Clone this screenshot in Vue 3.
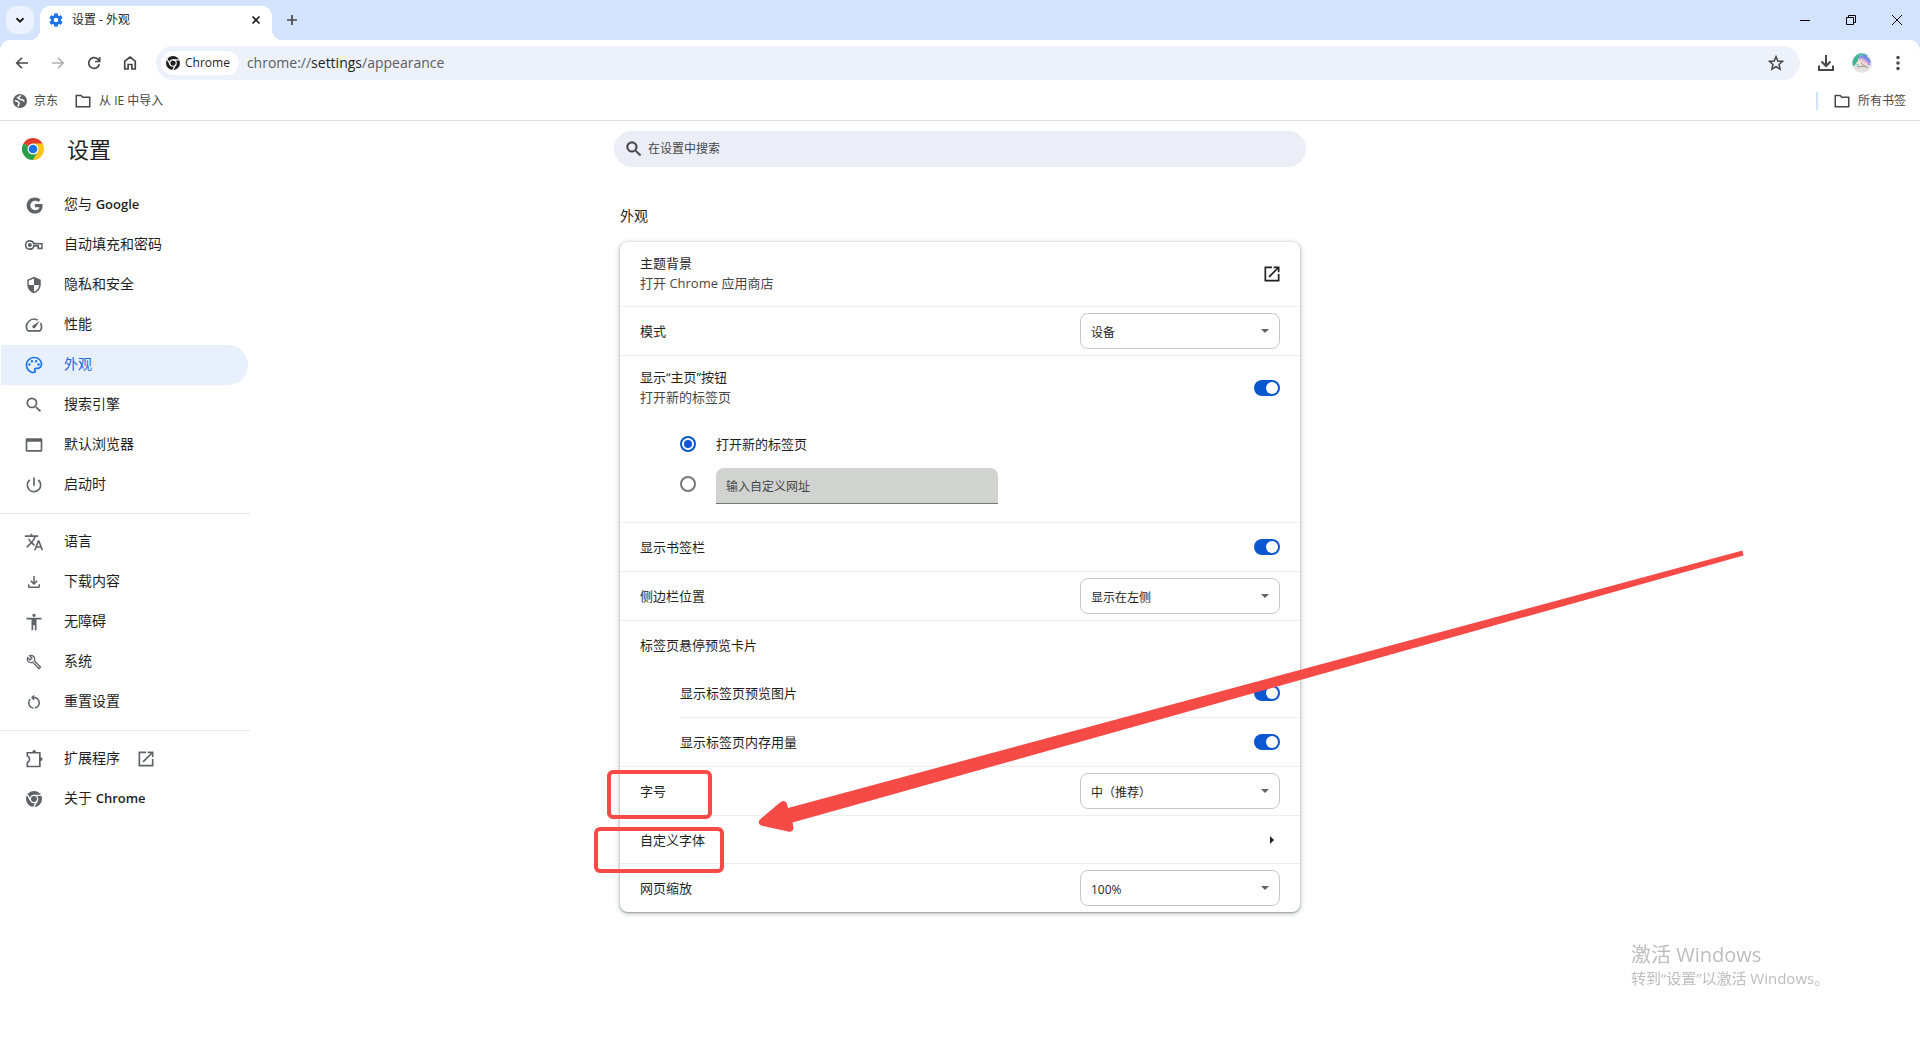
<script setup>
import { ref } from 'vue'

const paths = {
  google: 'M12.5 10v4.400h6.600c-.6 2.600-2.900 4.300-6.300 4.300a6.700 6.700 0 1 1 0-13.400c1.900 0 3.400.7 4.600 1.800l3.200-3.200A11.400 11.400 0 0 0 12.500.6C6 .6.900 5.600.9 12s5.100 11.400 11.600 11.400c6.700 0 10.900-4.600 10.900-11.200 0-.8-.1-1.500-.2-2.200z',
  shield: 'M12 1L3 5v6c0 5.550 3.840 10.740 9 12 5.160-1.260 9-6.450 9-12V5l-9-4zm0 10.990h7c-.53 4.120-3.280 7.790-7 8.940V12H5V6.300l7-3.110v8.800z',
  speed: 'M20.380 8.570l-1.230 1.850a8 8 0 0 1-.22 7.580H5.070A8 8 0 0 1 15.580 6.850l1.850-1.230A10 10 0 0 0 3.350 19a2 2 0 0 0 1.720 1h13.850a2 2 0 0 0 1.740-1 10 10 0 0 0-.27-10.440zM10.590 15.410a2 2 0 0 0 2.830 0l5.660-8.490-8.490 5.660a2 2 0 0 0 0 2.830z',
  palette: 'M12 22C6.490 22 2 17.510 2 12S6.490 2 12 2s10 4.040 10 9c0 3.310-2.690 6-6 6h-1.770c-.28 0-.5.22-.5.5 0 .12.05.23.13.33.41.47.64 1.060.64 1.670A2.500 2.500 0 0 1 12 22zm0-18c-4.410 0-8 3.590-8 8s3.590 8 8 8c.28 0 .5-.22.5-.5a.54.54 0 0 0-.14-.35c-.41-.46-.63-1.050-.63-1.650a2.500 2.500 0 0 1 2.500-2.500H16c2.210 0 4-1.790 4-4 0-3.860-3.590-7-8-7zM5 11.500a1.500 1.500 0 1 0 3 0a1.500 1.500 0 1 0-3 0zM8 7.500a1.500 1.500 0 1 0 3 0a1.500 1.500 0 1 0-3 0zM13 7.500a1.500 1.500 0 1 0 3 0a1.500 1.500 0 1 0-3 0zM16 11.500a1.500 1.500 0 1 0 3 0a1.500 1.500 0 1 0-3 0z',
  search: 'M15.500 14h-.79l-.28-.27A6.471 6.471 0 0 0 16 9.500 6.500 6.500 0 1 0 9.500 16c1.610 0 3.090-.59 4.230-1.570l.27.28v.79l5 4.990L20.490 19l-4.990-5zm-6 0C7.010 14 5 11.990 5 9.500S7.010 5 9.500 5 14 7.010 14 9.500 11.990 14 9.500 14z',
  browser: 'M3.500 4h17A1.500 1.500 0 0 1 22 5.500v13a1.500 1.500 0 0 1-1.500 1.500h-17A1.500 1.500 0 0 1 2 18.500v-13A1.500 1.500 0 0 1 3.500 4zM4 8v10h16V8z',
  power: 'M13 3h-2v10h2V3zm4.830 2.170l-1.420 1.420A6.920 6.920 0 0 1 19 12c0 3.870-3.130 7-7 7A6.995 6.995 0 0 1 7.580 6.580L6.170 5.170A8.932 8.932 0 0 0 3 12a9 9 0 0 0 18 0c0-2.740-1.230-5.180-3.170-6.830z',
  translate: 'M12.870 15.070l-2.540-2.510.03-.03A17.520 17.520 0 0 0 14.070 6H17V4h-7V2H8v2H1v1.990h11.170C11.500 7.920 10.440 9.750 9 11.350 8.070 10.320 7.300 9.190 6.690 8h-2c.73 1.630 1.730 3.170 2.980 4.560l-5.090 5.020L4 19l5-5 3.110 3.110.76-2.040zM18.500 10h-2L12 22h2l1.120-3h4.750L21 22h2l-4.500-12zm-2.620 7l1.620-4.330L19.120 17h-3.240z',
  download: 'M12 16l5-5-1.400-1.450-2.600 2.600V4h-2v8.150L8.400 9.550 7 11zM6 20c-1.100 0-2-.9-2-2v-3h2v3h12v-3h2v3c0 1.100-.9 2-2 2z',
  person: 'M12 2c1.100 0 2 .9 2 2s-.9 2-2 2-2-.9-2-2 .9-2 2-2zm9 7h-6v13h-2v-6h-2v6H9V9H3V7h18v2z',
  wrench: 'M22.610 18.990l-9.080-9.080c.93-2.340.45-5.100-1.440-7C9.790.61 6.210.4 3.660 2.260L7.500 6.110 6.080 7.520 2.250 3.690C.39 6.230.6 9.820 2.900 12.110c1.860 1.860 4.570 2.350 6.890 1.480l9.110 9.110c.39.39 1.020.39 1.410 0l2.300-2.300c.4-.38.4-1.010 0-1.410zm-3 1.600l-9.460-9.460c-.61.45-1.290.72-2 .82-1.360.2-2.790-.21-3.830-1.250C3.370 9.760 2.930 8.500 3 7.260l3.090 3.090 4.240-4.240-3.090-3.090c1.240-.07 2.490.37 3.440 1.310 1.080 1.080 1.490 2.570 1.240 3.960-.12.71-.42 1.370-.88 1.960l9.450 9.450-.88.89z',
  reset: 'M6 13c0-1.650.67-3.150 1.760-4.240L6.340 7.340A8.014 8.014 0 0 0 4 13c0 4.080 3.050 7.440 7 7.930v-2.020c-2.830-.48-5-2.940-5-5.910zm14 0c0-4.420-3.580-8-8-8-.06 0-.12.01-.18.01l1.090-1.090L11.500 2.500 8 6l3.500 3.500 1.410-1.410-1.080-1.080c.06 0 .12-.01.17-.01 3.310 0 6 2.690 6 6 0 2.970-2.170 5.430-5 5.910v2.020c3.950-.49 7-3.850 7-7.930z',
  launch: 'M19 19H5V5h7V3H3v18h18v-9h-2v7zM14 3v2h3.590l-9.830 9.830 1.410 1.410L19 6.410V10h2V3h-7z',
  key: 'M7 6a6 6 0 1 0 5.700 8H16v3h6.500V9.500h-.8l-9-.1A6 6 0 0 0 7 6zm0 2a4 4 0 0 1 3.900 3.400H20.700V15H18v-3h-7.100A4 4 0 1 1 7 8zm0 1.500a2.500 2.500 0 1 0 0 5a2.500 2.500 0 0 0 0-5z',
  puzzle: 'M10 3.500a2.200 2.200 0 0 1 4.400 0H20V9.800a2.300 2.300 0 0 1 0 4.600V22H3v-6.500a3.300 3.300 0 0 0 0-6.500V3.500zM5 5.500v2.200a5.200 5.200 0 0 1 0 9V20h13V5.500z',
  gear: 'M19.430 12.980c.04-.32.07-.64.07-.98s-.03-.66-.07-.98l2.110-1.650c.19-.15.24-.42.12-.64l-2-3.460c-.12-.22-.39-.3-.61-.22l-2.490 1c-.52-.4-1.080-.73-1.690-.98l-.38-2.650A.49.49 0 0 0 14 2h-4c-.25 0-.46.18-.49.42l-.38 2.650c-.61.25-1.170.59-1.690.98l-2.490-1c-.23-.09-.49 0-.61.22l-2 3.460c-.13.22-.07.49.12.64l2.110 1.650c-.04.32-.07.65-.07.98s.03.66.07.98l-2.110 1.650c-.19.15-.24.42-.12.64l2 3.460c.12.22.39.3.61.22l2.490-1c.52.4 1.080.73 1.690.98l.38 2.650c.03.24.24.42.49.42h4c.25 0 .46-.18.49-.42l.38-2.650c.61-.25 1.170-.59 1.690-.98l2.490 1c.23.09.49 0 .61-.22l2-3.460c.12-.22.07-.49-.12-.64l-2.110-1.650zM12 15.500a3.500 3.500 0 1 1 0-7a3.500 3.500 0 0 1 0 7z',
  folder: 'M3 4.500h6.500l2 2.500H21v12.500H3z',
}

const menus = [
  [
    { icon: 'google', text: '您与 ', latin: 'Google', size: 17 },
    { icon: 'key', text: '自动填充和密码' },
    { icon: 'shield', text: '隐私和安全', size: 18 },
    { icon: 'speed', text: '性能' },
    { icon: 'palette', text: '外观', active: true },
    { icon: 'search', text: '搜索引擎' },
    { icon: 'browser', text: '默认浏览器', size: 20 },
    { icon: 'power', text: '启动时' },
  ],
  [
    { icon: 'translate', text: '语言' },
    { icon: 'download', text: '下载内容', size: 18 },
    { icon: 'person', text: '无障碍' },
    { icon: 'wrench', text: '系统', size: 16 },
    { icon: 'reset', text: '重置设置', size: 18 },
  ],
  [
    { icon: 'puzzle', text: '扩展程序', external: true },
    { icon: 'chrome', text: '关于 ', latin: 'Chrome' },
  ],
]

const homeButton = ref(true)
const bookmarks = ref(true)
const previewImage = ref(true)
const memoryUsage = ref(true)
const homeTarget = ref('newtab')
</script>

<template>
  <div class="window">
    <header class="tabstrip">
      <button class="tab-search" aria-label="搜索标签页">
        <svg width="12" height="12" viewBox="0 0 12 12" class="line"><path d="M2.500 4.200L6 7.700l3.500-3.500" stroke-width="2" /></svg>
      </button>
      <div class="tab">
        <svg width="16" height="16" viewBox="0 0 24 24" class="tab-gear"><path :d="paths.gear" /></svg>
        <span class="tab-title">设置 - 外观</span>
        <button class="bare" aria-label="关闭标签页">
          <svg width="16" height="16" viewBox="0 0 16 16" class="line"><path d="M4.500 4.500l7 7M11.500 4.500l-7 7" stroke-width="1.600" /></svg>
        </button>
      </div>
      <button class="bare new-tab" aria-label="新标签页">
        <svg width="16" height="16" viewBox="0 0 16 16" class="line soft"><path d="M8 3v10M3 8h10" stroke-width="1.700" /></svg>
      </button>
      <div class="captions">
        <button aria-label="最小化"><svg width="10" height="10" viewBox="0 0 10 10" class="hair"><path d="M0 5.500h10" /></svg></button>
        <button aria-label="还原"><svg width="10" height="10" viewBox="0 0 10 10" class="hair"><path d="M.5 2.500h7v7h-7zM2.500 2.500v-2h7v7h-2" /></svg></button>
        <button aria-label="关闭"><svg width="10" height="10" viewBox="0 0 10 10" class="hair"><path d="M0 0l10 10M10 0L0 10" /></svg></button>
      </div>
    </header>

    <div class="chrome-bars">
      <div class="toolbar">
        <button class="tool" aria-label="后退"><svg width="18" height="18" viewBox="0 0 24 24" class="line soft"><path d="M20 12H5.500M12 5l-7 7 7 7" stroke-width="2.200" /></svg></button>
        <button class="tool" aria-label="前进" disabled><svg width="18" height="18" viewBox="0 0 24 24" class="line faint"><path d="M4 12h14.500M12 5l7 7-7 7" stroke-width="2.200" /></svg></button>
        <button class="tool" aria-label="重新加载"><svg width="18" height="18" viewBox="0 0 24 24" class="line soft"><path d="M19.200 13.500A7.200 7.200 0 1 1 17 6.700l2 2M19.500 4v6h-6" stroke-width="2.300" /></svg></button>
        <button class="tool" aria-label="主页"><svg width="18" height="18" viewBox="0 0 24 24" class="line soft"><path d="M5 9.500L12 4l7 5.500V20h-4.500v-6h-5v6H5z" stroke-width="2.300" /></svg></button>
        <div class="omnibox">
          <span class="chip">
            <svg width="14" height="14" viewBox="0 0 24 24">
              <circle cx="12" cy="12" r="12" class="ink" />
              <circle cx="12" cy="12" r="5.500" class="ring" />
              <path d="M12 6.500h11M7.300 14.800L2 5.500M16.700 14.800L11.500 24" class="ring" />
              <circle cx="12" cy="12" r="3.600" class="ink" />
            </svg>
            Chrome
          </span>
          <span class="url">chrome://<b>settings</b>/appearance</span>
          <button class="bare star" aria-label="为此标签页添加书签">
            <svg width="20" height="20" viewBox="0 0 24 24" class="line soft"><path d="M12 4.300l2.200 5.300 5.700.5-4.300 3.700 1.300 5.600-4.900-3-4.900 3 1.300-5.600-4.300-3.700 5.700-.5z" stroke-width="1.800" /></svg>
          </button>
        </div>
        <div class="tool-end">
          <button class="tool" aria-label="下载内容"><svg width="18" height="18" viewBox="0 0 18 18" class="line soft"><path d="M9 1v10.500M4.500 7.500L9 12l4.500-4.500M2 11.500V16h14v-4.500" stroke-width="2" /></svg></button>
          <button class="tool" aria-label="个人资料">
            <svg width="20" height="20" viewBox="0 0 20 20">
              <circle cx="10" cy="10" r="10" fill="#e4e3e2" />
              <path d="M1 13A10 10 0 0 1 8 .3l3 2-6.500 9z" fill="#3fb396" />
              <path d="M7 .6a10 10 0 0 1 9 2l-4 2.400-6-2z" fill="#57c3ae" />
              <path d="M7 4q6-1 10.500 8" fill="none" stroke="#8f8fe8" stroke-width="2.600" />
              <path d="M11 2.500q5 1.500 7 7" fill="none" stroke="#6f86dc" stroke-width="2" />
              <path d="M6 7q6-1 10 5" fill="none" stroke="#e9bcd0" stroke-width="2.500" />
              <path d="M3 12l4-6 2 4 6 2-8 3z" fill="#efe2d4" />
              <path d="M3 12l4-1-1 2z" fill="#63cdd0" />
              <path d="M5 14l8-1 3 2M9 10l5 4" fill="none" stroke="#9a9290" />
            </svg>
          </button>
          <button class="tool" aria-label="自定义及控制"><svg width="18" height="18" viewBox="0 0 18 18" class="fill-soft"><circle cx="9" cy="3.500" r="1.700" /><circle cx="9" cy="9" r="1.700" /><circle cx="9" cy="14.500" r="1.700" /></svg></button>
        </div>
      </div>

      <nav class="bookmarks">
        <a href="#">
          <svg width="14" height="14" viewBox="0 0 14 14"><circle cx="7" cy="7" r="7" fill="#5f6368" /><path d="M8 1.500L4.800 3.800 7.500 5.500l2 .3 1.800 1.700M1.800 6.500l3 1 1.400 1.600L5 12.500" fill="none" stroke="#fff" stroke-width="1.500" /></svg>
          京东
        </a>
        <a href="#"><svg width="18" height="18" viewBox="0 0 24 24" class="line soft"><path :d="paths.folder" stroke-width="2" /></svg>从 IE 中导入</a>
        <a href="#" class="all"><svg width="18" height="18" viewBox="0 0 24 24" class="line soft"><path :d="paths.folder" stroke-width="2" /></svg>所有书签</a>
      </nav>
    </div>

    <div class="page">
      <div class="brand">
        <svg width="22" height="22" viewBox="0 0 48 48">
          <path d="M24 24L3.200 12A24 24 0 0 1 44.800 12z" fill="#e33b2e" />
          <path d="M24 24L3.200 12A24 24 0 0 0 24 48l10.400-18z" fill="#2a9d48" />
          <path d="M24 12h20.800A24 24 0 0 1 24 48l10.400-18z" fill="#fcc31e" />
          <circle cx="24" cy="24" r="12" fill="#fff" />
          <circle cx="24" cy="24" r="9.500" fill="#1a73e8" />
        </svg>
        <h1>设置</h1>
      </div>
      <label class="search">
        <svg width="20" height="20" viewBox="0 0 24 24" class="fill-soft"><path :d="paths.search" stroke="#474747" stroke-width=".5" /></svg>
        <input type="text" placeholder="在设置中搜索" aria-label="在设置中搜索" />
      </label>

      <nav class="side">
        <ul v-for="(menu, i) in menus" :key="i">
          <li v-for="item in menu" :key="item.text">
            <a href="#" :class="{ active: item.active }">
              <span class="icon">
                <svg v-if="item.icon === 'chrome'" width="16" height="16" viewBox="0 0 24 24">
                  <circle cx="12" cy="12" r="12" />
                  <circle cx="12" cy="12" r="5.500" class="ring" />
                  <path d="M12 6.500h11M7.300 14.800L2 5.500M16.700 14.800L11.500 24" class="ring" />
                  <circle cx="12" cy="12" r="3.600" />
                </svg>
                <svg v-else :width="item.size || 20" :height="item.size || 20" viewBox="0 0 24 24"><path :d="paths[item.icon]" fill-rule="evenodd" /></svg>
              </span>
              <span class="name">{{ item.text }}<b v-if="item.latin">{{ item.latin }}</b></span>
              <svg v-if="item.external" class="external" width="20" height="20" viewBox="0 0 24 24"><path :d="paths.launch" /></svg>
            </a>
          </li>
        </ul>
      </nav>

      <main>
        <h2>外观</h2>
        <section class="card">
          <div class="row two">
            <div class="name">主题背景<small>打开 Chrome 应用商店</small></div>
            <button class="bare dark" aria-label="打开 Chrome 应用商店"><svg width="20" height="20" viewBox="0 0 24 24"><path :d="paths.launch" /></svg></button>
          </div>
          <div class="row">
            <label for="mode">模式</label>
            <span class="select"><select id="mode"><option>设备</option><option>浅色</option><option>深色</option></select><i></i></span>
          </div>
          <div class="row two">
            <label for="home" class="name">显示“主页”按钮<small>打开新的标签页</small></label>
            <input id="home" v-model="homeButton" type="checkbox" role="switch" class="switch" />
          </div>
          <div class="radios">
            <div class="option"><input id="newtab" v-model="homeTarget" type="radio" name="home" value="newtab" /><label for="newtab">打开新的标签页</label></div>
            <div class="option"><input v-model="homeTarget" type="radio" name="home" value="custom" aria-label="自定义网址" /><input type="text" class="address" placeholder="输入自定义网址" aria-label="输入自定义网址" disabled /></div>
          </div>
          <div class="row">
            <label for="bar">显示书签栏</label>
            <input id="bar" v-model="bookmarks" type="checkbox" role="switch" class="switch" />
          </div>
          <div class="row">
            <label for="panel">侧边栏位置</label>
            <span class="select"><select id="panel"><option>显示在左侧</option><option>显示在右侧</option></select><i></i></span>
          </div>
          <div class="row">标签页悬停预览卡片</div>
          <div class="nested">
            <div class="row">
              <label for="preview">显示标签页预览图片</label>
              <input id="preview" v-model="previewImage" type="checkbox" role="switch" class="switch" />
            </div>
            <div class="row">
              <label for="memory">显示标签页内存用量</label>
              <input id="memory" v-model="memoryUsage" type="checkbox" role="switch" class="switch" />
            </div>
          </div>
          <div class="row">
            <label for="size">字号</label>
            <span class="select"><select id="size"><option>中（推荐）</option><option>大</option></select><i></i></span>
          </div>
          <div class="row link">
            自定义字体
            <button class="bare dark" aria-label="自定义字体"><svg width="16" height="16" viewBox="0 0 16 16"><path d="M6 4l4 4-4 4z" /></svg></button>
          </div>
          <div class="row">
            <label for="zoom">网页缩放</label>
            <span class="select"><select id="zoom"><option>100%</option><option>125%</option></select><i></i></span>
          </div>

          <div class="mark mark-size"></div>
          <div class="mark mark-font"></div>
          <svg class="arrow" width="990" height="286" viewBox="756 548 990 286">
            <path d="M1742.500 550.500L1743.500 555.500L792.500 822.500L793.500 828Q793 832.500 788 831.500L761 825.500Q757 823 760 819.500L780 802.500Q785.500 799 787 804L788 808Z" />
          </svg>
        </section>
      </main>
    </div>

    <aside class="watermark"><p>激活 Windows</p><p class="hint">转到“设置”以激活 Windows。</p></aside>
  </div>
</template>

<style>
body {
  margin: 0;
  background: #fff;
}
</style>

<style scoped>
* {
  box-sizing: border-box;
}
.window {
  min-height: 100vh;
  font-family: "Open Sans", "Noto Sans CJK SC", sans-serif;
  font-size: 13px;
  line-height: 20px;
  color: #1f1f1f;
}
svg {
  display: block;
  flex: none;
}
button,
input,
select {
  margin: 0;
  font: inherit;
  color: inherit;
}
button {
  display: flex;
  align-items: center;
  justify-content: center;
  padding: 0;
  border: 0;
  background: none;
}
a {
  color: inherit;
  text-decoration: none;
}
.line {
  fill: none;
  stroke: #1f1f1f;
}
.soft {
  stroke: #474747;
}
.faint {
  stroke: #b0b0b0;
}
.fill-soft {
  fill: #474747;
}
.hair {
  fill: none;
  stroke: #000;
}
.ink {
  fill: #1f1f1f;
}
.ring {
  fill: none;
  stroke: #fff;
  stroke-width: 2;
}

.tabstrip {
  display: flex;
  align-items: flex-start;
  height: 40px;
  background: #d3e3fd;
  font-size: 12px;
}
.tab-search {
  width: 28px;
  height: 28px;
  margin: 6px;
  border-radius: 10px;
  background: #edf3fe;
}
.tab {
  position: relative;
  display: flex;
  align-items: center;
  gap: 8px;
  width: 232px;
  height: 34px;
  margin-top: 6px;
  padding: 0 8px 6px;
  border-radius: 10px 10px 0 0;
  background: #fff;
}
.tab::before,
.tab::after {
  content: "";
  position: absolute;
  bottom: 0;
  width: 10px;
  height: 10px;
}
.tab::before {
  right: 100%;
  background: radial-gradient(circle at 0 0, transparent 10px, #fff 10px);
}
.tab::after {
  left: 100%;
  background: radial-gradient(circle at 100% 0, transparent 10px, #fff 10px);
}
.tab-gear {
  fill: #1a73e8;
}
.tab-title {
  flex: 1;
}
.new-tab {
  width: 28px;
  height: 28px;
  margin: 6px;
}
.captions {
  display: flex;
  margin-left: auto;
}
.captions button {
  width: 46px;
  height: 40px;
}

.chrome-bars {
  border-bottom: 1px solid #dadce0;
  background: linear-gradient(#d3e3fd 10px, #fff 10px);
}
.toolbar {
  display: flex;
  align-items: center;
  height: 46px;
  padding: 0 4px;
  border-radius: 10px 10px 0 0;
  background: #fff;
}
.tool {
  width: 36px;
  height: 34px;
}
.omnibox {
  display: flex;
  flex: 1;
  align-items: center;
  height: 34px;
  margin-left: 8px;
  padding: 0 14px 0 5px;
  border-radius: 17px;
  background: #edf1fa;
}
.chip {
  display: flex;
  align-items: center;
  gap: 5px;
  height: 24px;
  padding: 0 9px 0 5px;
  border-radius: 12px;
  background: #fff;
  font-size: 12px;
}
.url {
  margin-left: 8px;
  font-size: 14px;
  color: #5a5d61;
}
.url b {
  font-weight: 400;
  color: #1f1f1f;
}
.star {
  margin-left: auto;
}
.tool-end {
  display: flex;
  padding-left: 8px;
}
.bookmarks {
  display: flex;
  align-items: center;
  gap: 16px;
  height: 34px;
  padding: 0 14px 5px 13px;
  font-size: 12px;
  color: #474747;
}
.bookmarks a {
  display: flex;
  align-items: center;
  gap: 7px;
}
.all {
  margin-left: auto;
  padding-left: 15px;
  border-left: 2px solid #d3e3fd;
  line-height: 16px;
}

.page {
  display: grid;
  grid-template-columns: 250px 1fr 250px;
  grid-template-rows: 56px auto;
}
.brand {
  display: flex;
  align-items: center;
  gap: 23px;
  padding-left: 22px;
}
h1,
h2,
p,
ul {
  margin: 0;
  padding: 0;
  font-weight: 400;
}
h1 {
  font-size: 22px;
  line-height: 28px;
}
.search {
  display: flex;
  align-items: center;
  align-self: center;
  justify-self: center;
  gap: 4px;
  width: 100%;
  max-width: 692px;
  height: 36px;
  padding: 0 10px;
  border-radius: 18px;
  background: #ebeef7;
}
.search input {
  flex: 1;
  min-width: 0;
  padding: 0;
  border: 0;
  outline: 0;
  background: none;
  font-size: 12px;
}
input::placeholder {
  color: #474747;
  opacity: 1;
}
.side {
  grid-row: 2;
  grid-column: 1;
  font-size: 14px;
}
.side ul {
  padding: 8px 0;
  list-style: none;
}
.side ul + ul {
  border-top: 1px solid #e8e8e8;
}
.side a {
  display: flex;
  align-items: center;
  height: 40px;
  margin: 0 2px 0 1px;
  padding-left: 23px;
  border-radius: 0 20px 20px 0;
}
.side a.active {
  background: #e8f0fe;
  color: #1967d2;
}
.side svg {
  fill: #5f6368;
}
.side .active svg {
  fill: #1a73e8;
}
.side b {
  font-size: 13px;
  font-weight: 600;
}
.name {
  padding-bottom: 2px;
}
.icon {
  display: flex;
  justify-content: center;
  width: 20px;
  margin-right: 20px;
}
.external {
  margin-left: 16px;
}

main {
  grid-row: 2;
  grid-column: 2;
  justify-self: center;
  width: 100%;
  max-width: 680px;
  padding: 28px 0 96px;
}
h2 {
  font-size: 14px;
  line-height: 22px;
}
.card {
  position: relative;
  margin-top: 15px;
  border-radius: 8px;
  background: #fff;
  box-shadow: 0 1px 2px rgba(60, 64, 67, 0.4), 0 1px 5px 1px rgba(60, 64, 67, 0.25);
}
.row {
  display: flex;
  align-items: center;
  justify-content: space-between;
  height: 49px;
  padding: 0 20px;
  border-top: 1px solid #ededed;
}
.row:first-child {
  height: 64px;
  border-top: 0;
}
.two {
  height: 65px;
}
.link {
  height: 48px;
}
small {
  display: block;
  font-size: 13px;
  color: #474747;
}
.dark svg {
  fill: #1f1f1f;
}
.row .dark {
  margin-right: -2px;
}
.row.link .dark {
  margin-right: 0;
}
.nested {
  padding-left: 60px;
}
.nested .row {
  padding-left: 0;
}
.nested .row:first-child {
  height: 48px;
}
.select {
  display: grid;
  width: 200px;
}
.select select,
.select i {
  grid-area: 1 / 1;
}
.select select {
  height: 36px;
  padding: 3px 24px 0 10px;
  border: 1px solid #c7c7c7;
  border-radius: 8px;
  background: #fff;
  font-size: 12px;
  appearance: none;
}
.select i {
  align-self: center;
  justify-self: end;
  margin-right: 11px;
  border: 4px solid transparent;
  border-top-color: #5f6368;
  border-bottom: 0;
  pointer-events: none;
}
.switch {
  width: 26px;
  height: 16px;
  padding: 2px;
  border-radius: 8px;
  background: #747775;
  appearance: none;
}
.switch::before {
  content: "";
  display: block;
  width: 12px;
  height: 12px;
  border-radius: 50%;
  background: #fff;
}
.switch:checked {
  padding-left: 12px;
  background: #0b57d0;
}
.radios {
  padding: 4px 20px 18px 60px;
}
.option {
  display: flex;
  align-items: center;
  gap: 20px;
  height: 40px;
}
.option input[type="radio"] {
  display: grid;
  place-content: center;
  width: 16px;
  height: 16px;
  border: 2px solid #747775;
  border-radius: 50%;
  appearance: none;
}
.option input[type="radio"]:checked {
  border-color: #0b57d0;
}
.option input[type="radio"]:checked::before {
  content: "";
  width: 8px;
  height: 8px;
  border-radius: 50%;
  background: #0b57d0;
}
.option .address {
  align-self: flex-end;
  width: 282px;
  height: 36px;
  padding: 2px 10px 0;
  border: 0;
  border-bottom: 1px solid #747775;
  border-radius: 8px 8px 0 0;
  background: #d1d3d0;
  font-size: 12px;
}

.mark {
  position: absolute;
  border: 4px solid #f64a46;
  border-radius: 6px;
  pointer-events: none;
}
.mark-size {
  left: -13px;
  top: 528px;
  width: 105px;
  height: 49px;
}
.mark-font {
  left: -26px;
  top: 585px;
  width: 130px;
  height: 46px;
}
.arrow {
  position: absolute;
  left: 136px;
  top: 306px;
  fill: #f64a46;
  pointer-events: none;
}
.watermark {
  position: fixed;
  right: 69px;
  bottom: 52px;
  width: 220px;
  font-size: 15px;
  color: #bdbdbd;
  pointer-events: none;
}
.watermark p:first-child {
  font-size: 20px;
  line-height: 26px;
}
</style>
